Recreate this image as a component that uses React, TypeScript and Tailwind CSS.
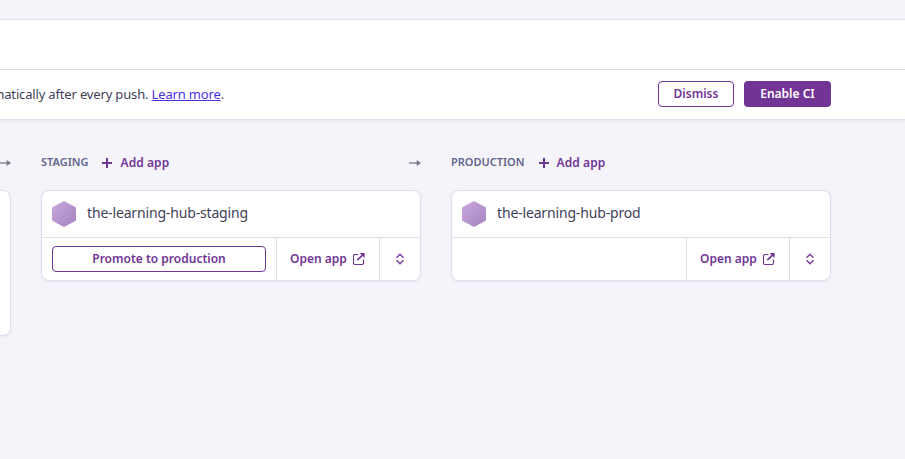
import type { ReactNode } from "react";

function FlowArrow() {
  return (
    <svg className="h-3 w-3 shrink-0" viewBox="0 0 12 12">
      <path d="M0 6H9" stroke="#737789" strokeWidth="1.3" />
      <path d="M7.7 3L12 6L7.7 9Z" fill="#737789" />
    </svg>
  );
}

function Hexagon({ id }: { id: string }) {
  return (
    <svg className="h-[26px] w-6 shrink-0" viewBox="0 0 24 26">
      <defs>
        <linearGradient id={id} x1="0" y1="0" x2="1" y2="1">
          <stop offset="0" stopColor="#c9a8dd" />
          <stop offset="1" stopColor="#a584c0" />
        </linearGradient>
      </defs>
      <path
        d="M11 .4Q12 -.1 13 .4L23.2 5.9Q24 6.4 24 7.3V18.7Q24 19.6 23.2 20.1L13 25.6Q12 26.1 11 25.6L.8 20.1Q0 19.6 0 18.7V7.3Q0 6.4 .8 5.9Z"
        fill={`url(#${id})`}
      />
    </svg>
  );
}

function ExternalIcon() {
  return (
    <svg className="ml-[6px] h-3 w-3 shrink-0" viewBox="0 0 12 12" fill="none" stroke="#713596">
      <path d="M5.5 1.5H2Q.5 1.5 .5 3V10Q.5 11.5 2 11.5H9Q10.5 11.5 10.5 10V6.5" strokeWidth="1.1" />
      <path d="M4.3 7.2L9.5 2.2" strokeWidth="1.6" />
      <path d="M6.6 0H11.6V5Z" fill="#713596" stroke="none" />
    </svg>
  );
}

function SortIcon() {
  return (
    <svg className="h-3 w-2 shrink-0" viewBox="0 0 8 12" fill="none" stroke="#79399b" strokeWidth="1.4">
      <path d="M.5 4.7L4 1.3L7.5 4.7M.5 7.3L4 10.7L7.5 7.3" />
    </svg>
  );
}

function StageHeader({ title, arrow }: { title: ReactNode; arrow?: boolean }) {
  return (
    <div className="flex h-6 items-center">
      <span className="relative -top-px text-[11px] font-semibold text-[#62658b]">{title}</span>
      <button className="ml-[14px] flex items-center text-[12px] font-semibold tracking-[0.08px] text-[#713596]">
        <svg className="mr-2 h-[10px] w-[10px]" viewBox="0 0 10 10">
          <path d="M5 0V10M0 5H10" stroke="#713596" strokeWidth="2" />
        </svg>
        <span>Add app</span>
      </button>
      {arrow && <div className="ml-auto"><FlowArrow /></div>}
    </div>
  );
}

function AppCard({ name, id, promote }: { name: string; id: string; promote?: boolean }) {
  return (
    <div className="mt-[15px] h-[91px] overflow-hidden rounded-[8px] border border-[#dfdeed] bg-white shadow-[0_1px_3px_rgba(60,50,100,0.08)]">
      <div className="flex h-[47px] items-center border-b border-[#dfdeed] px-[10px]">
        <Hexagon id={id} />
        <span className="relative -top-[2px] ml-[11px] text-[14px] tracking-[-0.16px] text-[#3f3f58]">{name}</span>
      </div>
      <div className="flex h-[42px]">
        <div className="flex w-[234px] items-center px-[10px]">
          {promote && (
            <button className="h-[26px] w-full rounded-[4px] border border-[#713596] text-[12px] leading-6 font-semibold text-[#713596]">
              Promote to production
            </button>
          )}
        </div>
        <button className="flex w-[103px] items-center border-l border-[#dfdeed] pl-[13px] text-[12px] font-semibold text-[#713596]">
          <span>Open app</span>
          <ExternalIcon />
        </button>
        <button className="flex flex-1 items-center justify-center border-l border-[#dfdeed]">
          <SortIcon />
        </button>
      </div>
    </div>
  );
}

export default function App() {
  return (
    <div className="h-[459px] w-[905px] overflow-hidden bg-[#f5f4fa] pt-[19px] font-['Noto_Sans',sans-serif] whitespace-nowrap">
      <div className="h-[51px] border-y border-[#dfdeed] bg-white" />
      <div className="flex h-[50px] items-center border-b border-[#dfdeed] bg-white pr-[74px] pb-px shadow-[0_1px_3px_rgba(60,50,100,0.08)]">
        <div className="flex w-[224px] justify-end pt-[2px] text-[13px] tracking-[-0.16px] text-[#3f3f58]">
          <span>
            matically after every push. <a className="text-[#4b32df] underline">Learn more</a>.
          </span>
        </div>
        <button className="ml-auto h-[26px] w-[76px] rounded-[4px] border border-[#713596] text-[12px] leading-6 font-semibold text-[#713596]">
          Dismiss
        </button>
        <button className="ml-[10px] h-[26px] w-[87px] rounded-[4px] bg-[#713596] text-[12px] leading-[26px] font-semibold text-white">
          Enable CI
        </button>
      </div>
      <div className="flex gap-[30px] pt-[31px]">
        <section className="w-[11px] shrink-0">
          <div className="flex h-6 items-center justify-end">
            <FlowArrow />
          </div>
          <div className="mt-[15px] h-[146px] rounded-r-[8px] border-y border-r border-[#dfdeed] bg-white shadow-[0_1px_3px_rgba(60,50,100,0.08)]" />
        </section>
        <section className="w-[380px] shrink-0">
          <StageHeader title="STAGING" arrow />
          <AppCard id="staging-hexagon" name="the-learning-hub-staging" promote />
        </section>
        <section className="w-[380px] shrink-0">
          <StageHeader title="PRODUCTION" />
          <AppCard id="production-hexagon" name="the-learning-hub-prod" />
        </section>
      </div>
    </div>
  );
}
